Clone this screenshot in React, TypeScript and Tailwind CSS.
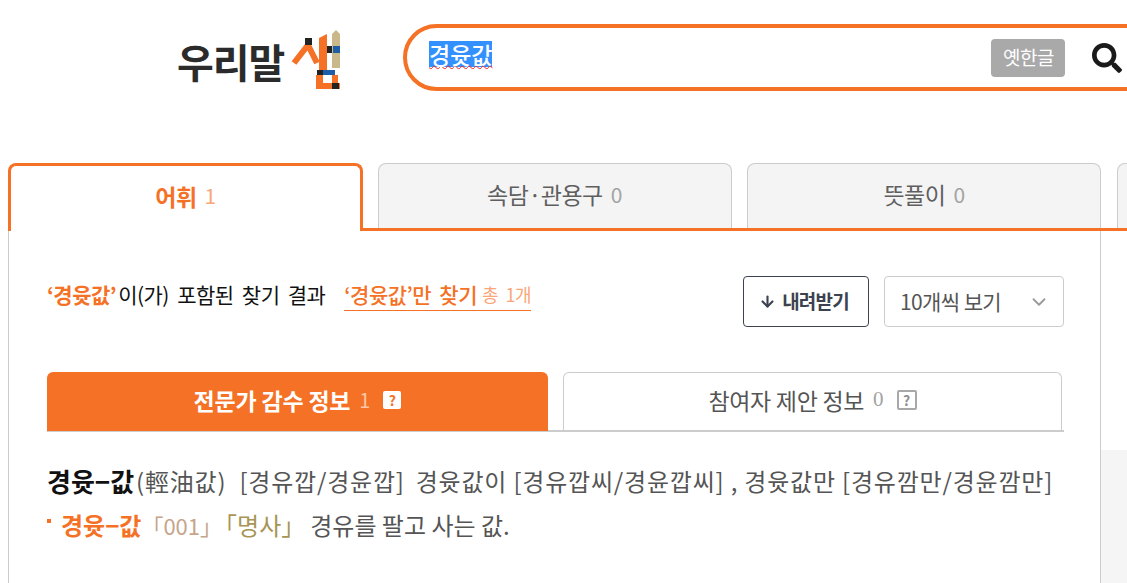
import React from "react";
import { ArrowDown, ChevronDown } from "lucide-react";
import { FaSearch } from "react-icons/fa";

const F = '"Noto Sans CJK KR","Noto Sans",sans-serif';

function Logo() {
  return (
    <div className="flex h-[67px] w-[226px] items-start">
      <span className="mt-[8px] w-[113px] text-[40px] leading-[58px] font-bold tracking-[-1px] whitespace-nowrap text-[#2b2b2b]">우리말</span>
      <svg width="52" height="64" viewBox="0 0 52 64" className="mt-[3px] shrink-0">
        <path d="M4 36 L18 18 L27 36" fill="none" stroke="#f47125" strokeWidth="6" strokeLinejoin="round" />
        <rect x="15" y="11" width="7" height="7" fill="#222" />
        <path d="M29 11 L37 7 V44 H29Z" fill="#f47125" />
        <path d="M42 7 L46 3 L50 7 V41 H42Z" fill="#c9b98a" />
        <rect x="37" y="19" width="5" height="7" fill="#222" />
        <rect x="43" y="19" width="7" height="7" fill="#1c5fa8" />
        <rect x="27" y="43" width="6" height="5" fill="#222" />
        <rect x="33" y="43" width="12" height="5" fill="#1c5fa8" />
        <rect x="26" y="48" width="7" height="14" fill="#f47125" />
        <rect x="26" y="56" width="24" height="6" fill="#f47125" />
        <rect x="42" y="48" width="6" height="9" fill="#f47125" />
        <rect x="42" y="56" width="7" height="6" fill="#222" />
      </svg>
    </div>
  );
}

function Tab({ label, count }: { label: string; count: string }) {
  return (
    <div className="flex h-[65px] w-[354px] shrink-0 items-center justify-center gap-[8px] rounded-t-[8px] border border-b-0 border-[#cccccc] bg-[#f4f4f4] pb-[3px] text-[23px] tracking-[-0.5px] text-[#5f5f5f]">
      <span>{label}</span>
      <span className="text-[21px] text-[#a3a3a3]">{count}</span>
    </div>
  );
}

function Help({ light }: { light?: boolean }) {
  return light ? (
    <span className="flex h-[18px] w-[18px] items-center justify-center rounded-[2px] bg-white text-[14px] leading-none font-bold text-[#f47125]">?</span>
  ) : (
    <span className="flex h-[20px] w-[20px] items-center justify-center rounded-[2px] border-2 border-[#a8a8a8] text-[14px] leading-none font-bold text-[#8f8f8f]">?</span>
  );
}

export default function App() {
  return (
    <div className="h-[583px] w-[1127px] overflow-hidden bg-white" style={{ fontFamily: F }}>
      <header className="flex w-[1200px] pt-[24px] pl-[177px]">
        <Logo />
        <div className="flex h-[67px] w-[760px] items-center rounded-[34px] border-[4px] border-[#f47125] pl-[22px]">
          <span className="-mt-[8px] bg-[#3390ff] text-[23px] leading-[26px] font-medium whitespace-nowrap text-white underline decoration-[#ff2020] decoration-wavy decoration-1">경윳값</span>
          <span className="ml-[499px] flex h-[38px] w-[74px] shrink-0 items-center justify-center rounded-[4px] bg-[#a9a9a9] text-[19px] tracking-[-0.5px] whitespace-nowrap text-white">옛한글</span>
          <FaSearch className="ml-[27px] shrink-0 text-[#1a1a1a]" size={30} />
        </div>
      </header>

      <nav className="mt-[72px] ml-2 flex w-[1200px] items-start gap-[15.5px] border-b-[3px] border-[#f47125]">
        <div className="relative -mr-[1px] -mb-[3px] flex h-[68px] w-[355px] shrink-0 items-center justify-center gap-[8px] rounded-t-[8px] border-[3px] border-b-0 border-[#f47125] bg-white pb-[5px] text-[23px] font-bold tracking-[-0.5px] text-[#f47125]">
          <span>어휘</span>
          <span className="text-[21px] font-normal text-[#f9a77a]">1</span>
        </div>
        <Tab label="속담·관용구" count="0" />
        <Tab label="뜻풀이" count="0" />
        <Tab label="" count="" />
      </nav>

      <div className="flex w-[1127px]">
        <main className="ml-2 h-[352px] w-[1093px] shrink-0 border-x border-[#cccccc] pt-[45px] pr-[36px] pl-[38px]">
          <div className="flex h-[51px] items-start justify-between">
            <div className="flex items-center text-[21px] leading-[36px] tracking-[-0.5px] [word-spacing:4px] whitespace-nowrap text-[#111111]">
              <b className="font-bold text-[#f47125]">‘경윳값’</b>
              <span className="ml-[2px]">이(가) 포함된 찾기 결과</span>
              <span className="ml-[19px] flex h-[33px] items-center border-b border-[#f47125] text-[#f47125]">
                <span className="font-medium">‘경윳값’만 찾기</span>
                <span className="ml-[5px] text-[18px] text-[#f9a77a]">총 1개</span>
              </span>
            </div>
            <div className="flex gap-[15px]">
              <div className="flex h-[51px] w-[126px] items-center justify-center gap-[6px] rounded-[4px] border border-[#3c4250] pr-[4px] text-[19px] font-bold tracking-[-0.8px] whitespace-nowrap text-[#3c4250]">
                <ArrowDown size={17} strokeWidth={3} />
                <span>내려받기</span>
              </div>
              <div className="flex h-[51px] w-[180px] items-center justify-between rounded-[4px] border border-[#cccccc] pr-[13px] pl-[15px] text-[21px] tracking-[-0.6px] whitespace-nowrap text-[#555555]">
                <span>10개씩 보기</span>
                <ChevronDown size={22} className="text-[#9a9a9a]" />
              </div>
            </div>
          </div>

          <div className="mt-[45px] flex h-[60px] items-end gap-[15px] border-b-2 border-[#cccccc]">
            <div className="-mb-[1px] flex h-[59px] w-[501px] items-center justify-center gap-[9px] rounded-t-[6px] bg-[#f47125] pb-[3px] text-white">
              <span className="text-[23px] font-bold tracking-[-0.2px] whitespace-nowrap">전문가 감수 정보</span>
              <span className="text-[20px] text-[#fbc6a8]">1</span>
              <span className="ml-[4px]"><Help light /></span>
            </div>
            <div className="flex h-[58px] w-[499px] items-center justify-center gap-[9px] rounded-t-[6px] border border-b-0 border-[#cccccc] bg-white pb-[3px] text-[#555555]">
              <span className="text-[23px] tracking-[-0.3px] whitespace-nowrap">참여자 제안 정보</span>
              <span className="text-[21px] text-[#a3a3a3]" style={{ fontFamily: '"Liberation Serif",serif' }}>0</span>
              <span className="ml-[4px]"><Help /></span>
            </div>
          </div>

          <div className="mt-[31px] flex items-center text-[24px] leading-[36px] tracking-[0.8px] whitespace-nowrap text-[#555555]">
            <b className="text-[26px] font-bold tracking-[0px] text-[#111111]">경윳−값</b>
            <span className="ml-[2px]">(輕油값)</span>
            <span className="ml-[13px]">[경유깝/경윤깝]</span>
            <span className="ml-[11px]">경윳값이 [경유깝씨/경윤깝씨] , 경윳값만 [경유깜만/경윤깜만]</span>
          </div>
          <div className="mt-[8px] flex items-center text-[24px] leading-[36px] whitespace-nowrap text-[#555555]">
            <span className="mb-[8px] h-[4px] w-[4px] bg-[#f47125]" />
            <b className="ml-[10px] text-[24px] font-bold text-[#f47125]">경윳−값</b>
            <span className="text-[22px] text-[#c5a58b]">「001<span className="tracking-[-9px]">」</span></span>
            <span className="text-[#a89455]">「명사」</span>
            <span className="ml-[5px]">경유를 팔고 사는 값.</span>
          </div>
        </main>
        <aside className="mt-[219px] h-[133px] flex-1 bg-[#f5f5f5]" />
      </div>
    </div>
  );
}
